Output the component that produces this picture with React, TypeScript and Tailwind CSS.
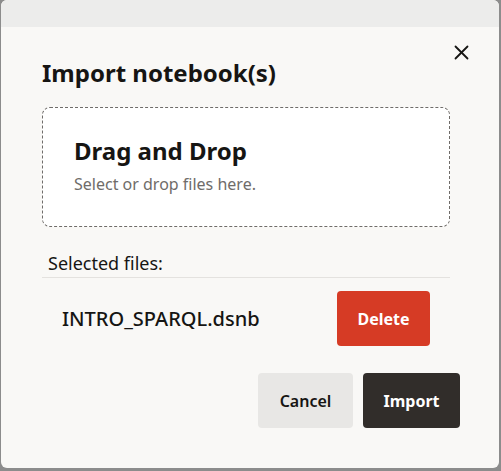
export default function App() {
  return (
    <div className="w-[501px] h-[471px] bg-[#8c8c8c] font-['Noto_Sans',sans-serif] text-[#161513]">
      <div className="relative ml-[1px] w-[498px] h-[468px] rounded-[6px] bg-[#f9f8f6] overflow-hidden">
        <div className="h-[27px] bg-[#ececeb]" />

        <button className="absolute left-[446px] top-[38px] w-[28px] h-[28px] flex items-center justify-center">
          <svg width="15" height="15" viewBox="0 0 15 15" fill="none" stroke="#161513" strokeWidth="1.8" strokeLinecap="round">
            <line x1="1.5" y1="1.5" x2="13.5" y2="13.5" />
            <line x1="13.5" y1="1.5" x2="1.5" y2="13.5" />
          </svg>
        </button>

        <div className="pl-[41px] pr-[49px]">
          <h1 className="mt-[30px] text-[24px] leading-[32px] font-bold">Import notebook(s)</h1>

          <div className="mt-[18px] h-[120px] rounded-[8px] border border-dashed border-[#6f6c69] bg-white pl-[31px] pt-[27px]">
            <div className="text-[24px] leading-[32px] font-bold">Drag and Drop</div>
            <div className="mt-[6px] text-[16px] leading-[22px] text-[#6f6c69]">Select or drop files here.</div>
          </div>

          <div className="mt-[24px] pl-[6px] pb-[2px] border-b border-[#e4e2df] text-[18px] leading-[24px]">
            Selected files:
          </div>

          <div className="mt-[13px] flex items-center">
            <div className="pl-[20px] w-[295px] text-[20px] font-medium">INTRO_SPARQL.dsnb</div>
            <button className="w-[93px] h-[55px] rounded-[4px] bg-[#d63b25] text-white text-[16px] font-bold">
              Delete
            </button>
          </div>
        </div>

        <div className="mt-[27px] pr-[39px] flex justify-end gap-[10px]">
          <button className="w-[95px] h-[55px] rounded-[4px] bg-[#e8e7e5] text-[16px] font-semibold">Cancel</button>
          <button className="w-[97px] h-[55px] rounded-[4px] bg-[#312d2a] text-white text-[16px] font-bold">Import</button>
        </div>
      </div>
    </div>
  );
}
